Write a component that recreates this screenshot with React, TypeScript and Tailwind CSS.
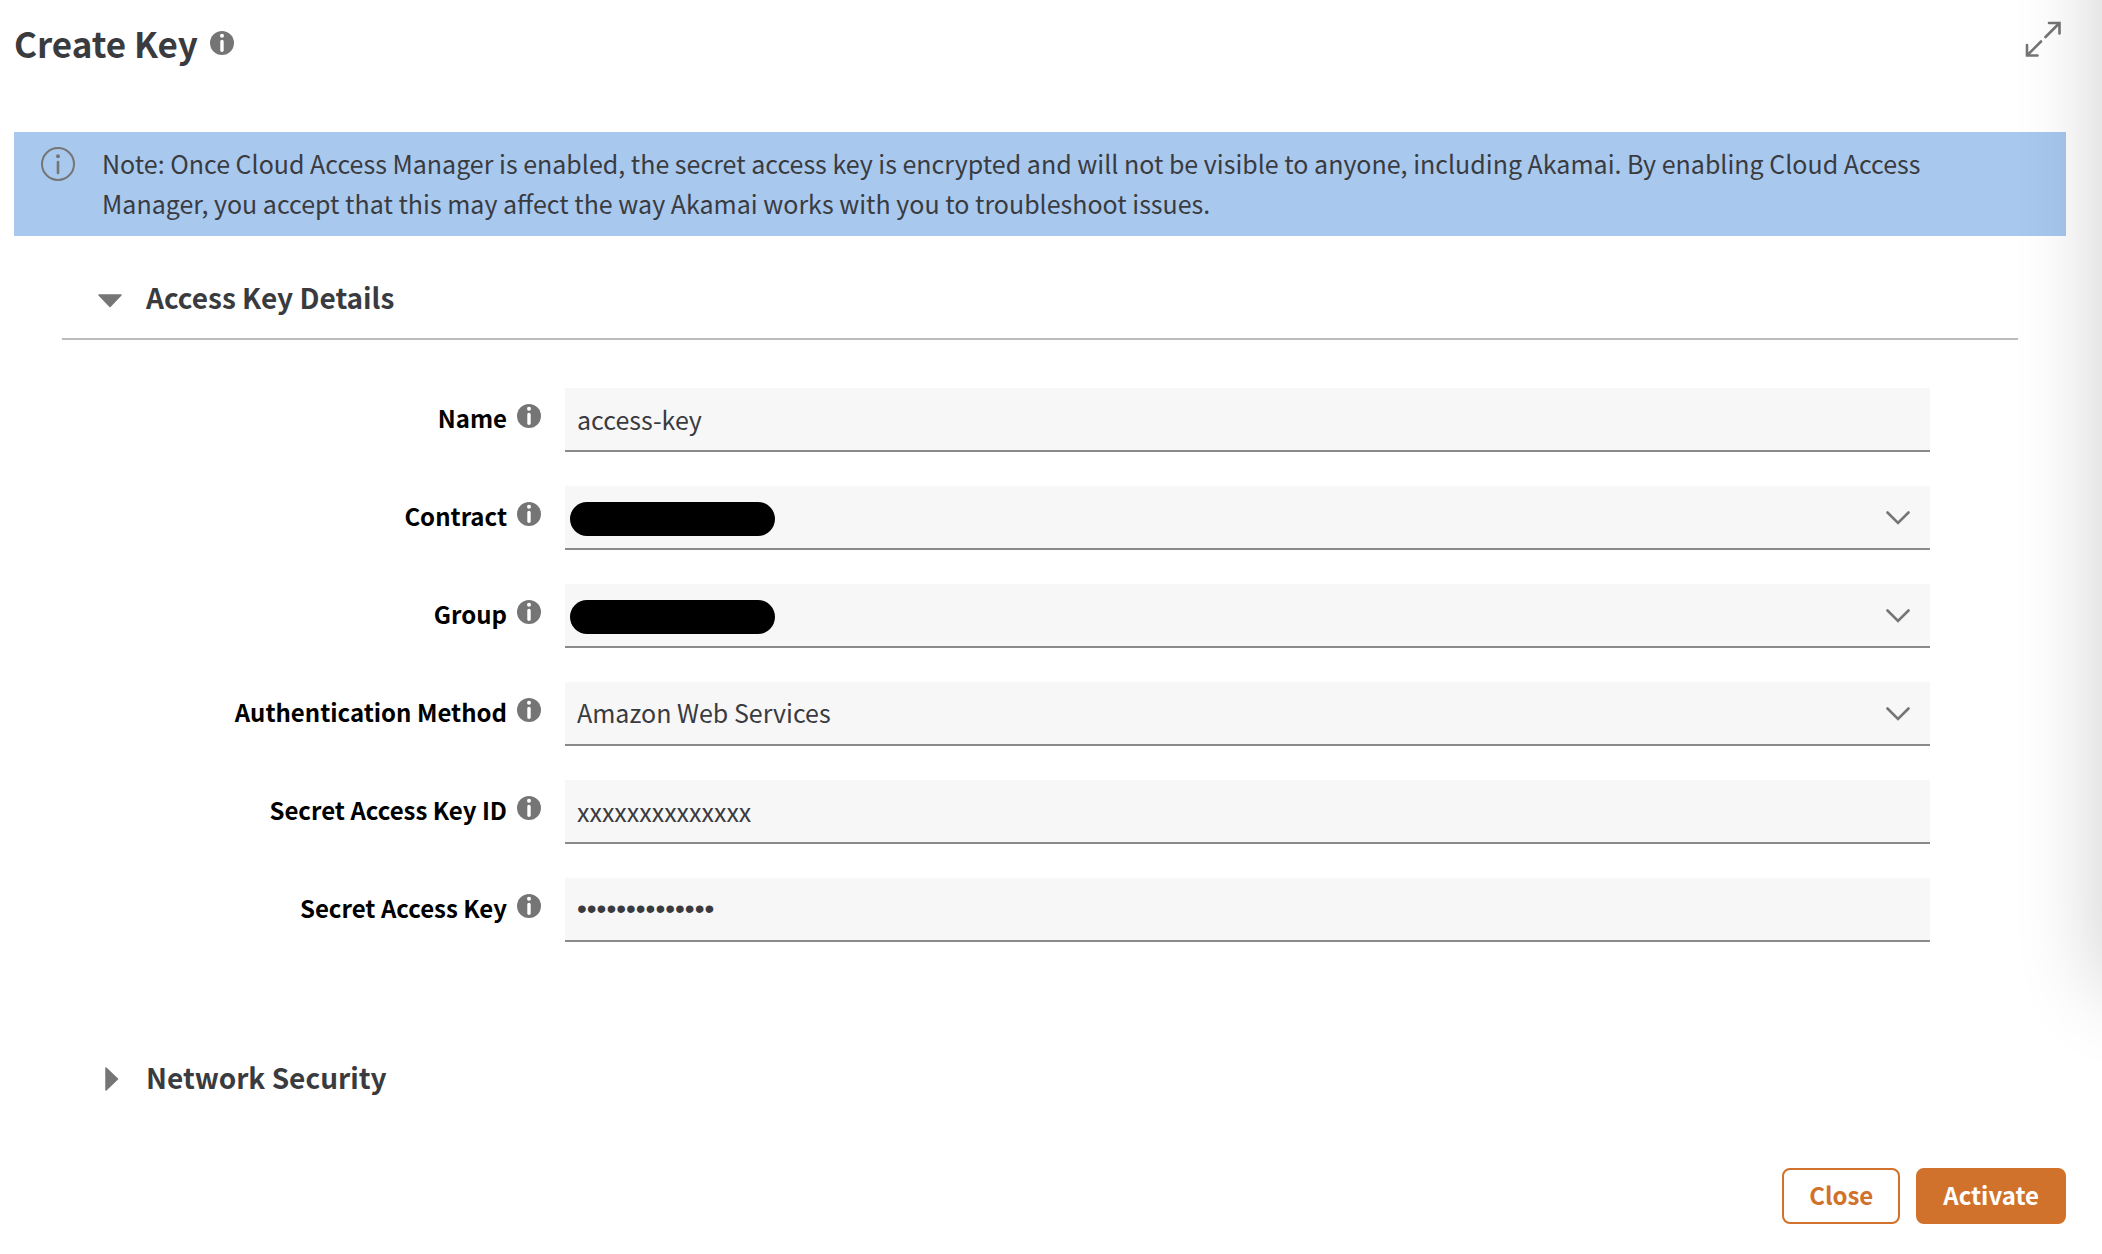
import { useState, type ReactNode } from 'react';

interface FieldProps {
  id: string;
  label: string;
  children: ReactNode;
}

const controlClass =
  "block h-16 w-full appearance-none rounded-none border-b-2 border-[#8a8a8a] bg-[#f7f7f7] px-3 text-[#3a3b3f] outline-none";

function InfoIcon() {
  return (
    <svg viewBox="0 0 24 24" className="size-6 shrink-0" aria-hidden="true">
      <circle cx="12" cy="12" r="12" fill="#757575" />
      <circle cx="12" cy="4.7" r="2" fill="#fff" />
      <path d="M12 10.5V19.3" stroke="#fff" strokeWidth="3.4" strokeLinecap="round" />
    </svg>
  );
}

function NoteIcon() {
  return (
    <svg viewBox="0 0 34 34" className="size-[34px] shrink-0" fill="none" stroke="#757575" strokeWidth="2" aria-hidden="true">
      <circle cx="17" cy="17" r="16" />
      <circle cx="17" cy="9.3" r="2" fill="#757575" stroke="none" />
      <path d="M17 15V26" strokeWidth="2.6" strokeLinecap="round" />
    </svg>
  );
}

function ExpandIcon() {
  return (
    <svg viewBox="0 0 36 36" className="size-9" fill="none" stroke="#757575" strokeWidth="2.6" strokeLinecap="round" aria-hidden="true">
      <path d="M24 2H34.5V12.5M34 2.5L20.5 16M12.5 34.5H2V24M2.5 34L16 20.5" />
    </svg>
  );
}

function Caret({ open }: { open: boolean }) {
  return (
    <svg viewBox="0 0 24 24" className="mt-1 size-6 shrink-0" fill="#757575" stroke="#757575" strokeWidth="1.5" strokeLinejoin="round" aria-hidden="true">
      {open ? <path d="M1 8H23L12 19.5z" /> : <path d="M8 1V23L19.5 12z" />}
    </svg>
  );
}

function Chevron() {
  return (
    <svg viewBox="0 0 24 14" className="pointer-events-none absolute top-[25px] right-5 h-[14px] w-6" fill="none" stroke="#757575" strokeWidth="2.6" strokeLinecap="round" aria-hidden="true">
      <path d="M1.5 1.5L12 12L22.5 1.5" />
    </svg>
  );
}

function Field({ id, label, children }: FieldProps) {
  return (
    <div className="grid grid-cols-[479px_1fr] gap-6">
      <div className="flex h-16 items-center justify-end gap-[10px]">
        <label htmlFor={id} className="pb-1 text-[24px] leading-10 font-semibold text-black">
          {label}
        </label>
        <span className="pb-2">
          <InfoIcon />
        </span>
      </div>
      <div className="relative">{children}</div>
    </div>
  );
}

// Valeur masquée d'une liste
function Redacted() {
  return <span className="pointer-events-none absolute top-4 left-[5px] h-[34px] w-[205px] rounded-full bg-black" />;
}

export default function App() {
  const [name, setName] = useState('access-key');
  const [keyId, setKeyId] = useState('xxxxxxxxxxxxxx');
  const [secret, setSecret] = useState('xxxxxxxxxxxxxx');
  const [detailsOpen, setDetailsOpen] = useState(true);
  const [networkOpen, setNetworkOpen] = useState(false);

  return (
    <div className="relative min-h-screen overflow-hidden bg-white pr-9 pl-[14px] font-['Noto_Sans_CJK_SC',sans-serif] text-[#3a3b3f]">
      <header className="flex h-[132px] items-start justify-between">
        <div className="flex items-center gap-3 pt-[19px]">
          <h1 className="text-[35px] leading-[48px] font-semibold">Create Key</h1>
          <InfoIcon />
        </div>
        <button type="button" aria-label="Expand" className="mt-[21px] mr-[5px]">
          <ExpandIcon />
        </button>
      </header>

      <div className="flex gap-[27px] bg-[#a8c8ee] pt-[11px] pr-20 pb-[13px] pl-[27px]">
        <span className="pt-1">
          <NoteIcon />
        </span>
        <p className="text-[25px] leading-10">
          Note: Once Cloud Access Manager is enabled, the secret access key is encrypted and will not be visible to
          anyone, including Akamai. By enabling Cloud Access Manager, you accept that this may affect the way Akamai
          works with you to troubleshoot issues.
        </p>
      </div>

      <main className="px-12">
        <h2 className="border-b-2 border-[#bbbbbb] pt-[41px] pb-[21px] pl-9">
          <button
            type="button"
            aria-expanded={detailsOpen}
            onClick={() => setDetailsOpen(!detailsOpen)}
            className="flex items-center gap-6 text-[28px] leading-10 font-semibold"
          >
            <Caret open={detailsOpen} />
            Access Key Details
          </button>
        </h2>

        {detailsOpen && (
          <form id="key-form" className="flex flex-col gap-[34px] pt-12 pr-[88px]" onSubmit={(e) => e.preventDefault()}>
            <Field id="name" label="Name">
              <input
                id="name"
                className={`${controlClass} text-[25px]`}
                value={name}
                onChange={(e) => setName(e.target.value)}
              />
            </Field>
            <Field id="contract" label="Contract">
              <select id="contract" className={`${controlClass} text-[25px]`}>
                <option value=""></option>
              </select>
              <Redacted />
              <Chevron />
            </Field>
            <Field id="group" label="Group">
              <select id="group" className={`${controlClass} text-[25px]`}>
                <option value=""></option>
              </select>
              <Redacted />
              <Chevron />
            </Field>
            <Field id="auth" label="Authentication Method">
              <select id="auth" className={`${controlClass} text-[25px]`}>
                <option>Amazon Web Services</option>
              </select>
              <Chevron />
            </Field>
            <Field id="key-id" label="Secret Access Key ID">
              <input
                id="key-id"
                className={`${controlClass} text-[25px]`}
                value={keyId}
                onChange={(e) => setKeyId(e.target.value)}
              />
            </Field>
            <Field id="secret" label="Secret Access Key">
              <input
                id="secret"
                type="password"
                className={`${controlClass} font-['Liberation_Sans',sans-serif] text-[28px]`}
                value={secret}
                onChange={(e) => setSecret(e.target.value)}
              />
            </Field>
          </form>
        )}

        <h2 className="pt-[115px] pl-9">
          <button
            type="button"
            aria-expanded={networkOpen}
            onClick={() => setNetworkOpen(!networkOpen)}
            className="flex items-center gap-6 text-[28px] leading-10 font-semibold"
          >
            <Caret open={networkOpen} />
            Network Security
          </button>
        </h2>
      </main>

      <footer className="flex justify-end gap-4 pt-[71px] pb-[30px]">
        <button
          type="button"
          className="h-14 rounded-lg border-2 border-[#d0722b] bg-white px-[25px] pb-[2px] text-[24px] leading-10 font-bold text-[#d0722b]"
        >
          Close
        </button>
        <button
          type="submit"
          form="key-form"
          className="h-14 rounded-lg border-2 border-[#d0722b] bg-[#d0722b] px-[25px] pb-[2px] text-[24px] leading-10 font-bold text-white"
        >
          Activate
        </button>
      </footer>

      {/* Ombre du panneau voisin */}
      <div className="pointer-events-none absolute -top-40 bottom-[264px] left-full w-96 shadow-[0_0_80px_rgba(0,0,0,0.2)]" />
    </div>
  );
}
